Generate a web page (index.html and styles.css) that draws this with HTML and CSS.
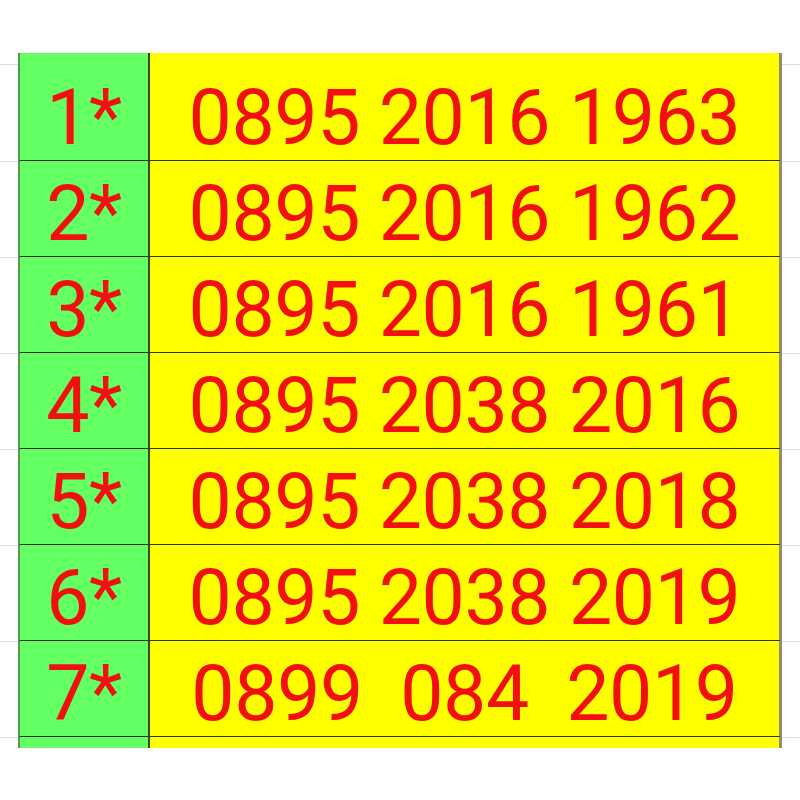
FILE: index.html
```html
<!DOCTYPE html>
<html>
<head>
<meta charset="utf-8">
<link rel="stylesheet" href="styles.css">
</head>
<body>
<div class="sheet">
  <div class="row edge-top">
    <div class="out"></div><div class="num"></div><div class="phone"></div><div class="out"></div>
  </div>
  <div class="row">
    <div class="out"></div><div class="num">1*</div><div class="phone">0895 2016 1963</div><div class="out"></div>
  </div>
  <div class="row">
    <div class="out"></div><div class="num">2*</div><div class="phone">0895 2016 1962</div><div class="out"></div>
  </div>
  <div class="row">
    <div class="out"></div><div class="num">3*</div><div class="phone">0895 2016 1961</div><div class="out"></div>
  </div>
  <div class="row">
    <div class="out"></div><div class="num">4*</div><div class="phone">0895 2038 2016</div><div class="out"></div>
  </div>
  <div class="row">
    <div class="out"></div><div class="num">5*</div><div class="phone">0895 2038 2018</div><div class="out"></div>
  </div>
  <div class="row">
    <div class="out"></div><div class="num">6*</div><div class="phone">0895 2038 2019</div><div class="out"></div>
  </div>
  <div class="row">
    <div class="out"></div><div class="num">7*</div><div class="phone">0899&nbsp; 084&nbsp; 2019</div><div class="out"></div>
  </div>
  <div class="row edge-bottom">
    <div class="out blank"></div><div class="num"></div><div class="phone"></div><div class="out blank"></div>
  </div>
</div>
</body>
</html>
```

FILE: styles.css
```css
html, body {
  margin: 0;
  padding: 0;
  background: #ffffff;
}

.sheet {
  padding-top: 53px;
  font-family: Roboto, "Liberation Sans", sans-serif;
}

.row {
  display: grid;
  grid-template-columns: 18px 132px 632px 18px;
  height: 96px;
}

.row > div {
  box-sizing: border-box;
  border-bottom: 2px solid #2e2e22;
}

.out {
  border-bottom: 1px solid #dcdcdc !important;
  height: 96px;
  margin-top: 1px;
}

.edge-top, .edge-top .out {
  height: 12px;
}
.edge-top .out {
  height: 11px;
}

.edge-bottom {
  height: 11px;
}
.edge-bottom > div {
  border-bottom: none !important;
}
.edge-bottom .out {
  height: 0;
}

.num {
  background: #63ff63;
  border-left: 2px solid #4f9a4f;
  border-right: 2px solid #2e4a2e;
  color: #f20f0f;
  font-size: 77px;
  line-height: 82px;
  padding-top: 12px;
  text-align: center;
  letter-spacing: -0.4px;
}

.phone {
  background: #ffff00;
  border-right: 3px solid #8d8d78;
  color: #f20f0f;
  font-size: 77px;
  line-height: 82px;
  padding-top: 12px;
  text-align: center;
  white-space: pre;
  letter-spacing: -0.4px;
}
```
